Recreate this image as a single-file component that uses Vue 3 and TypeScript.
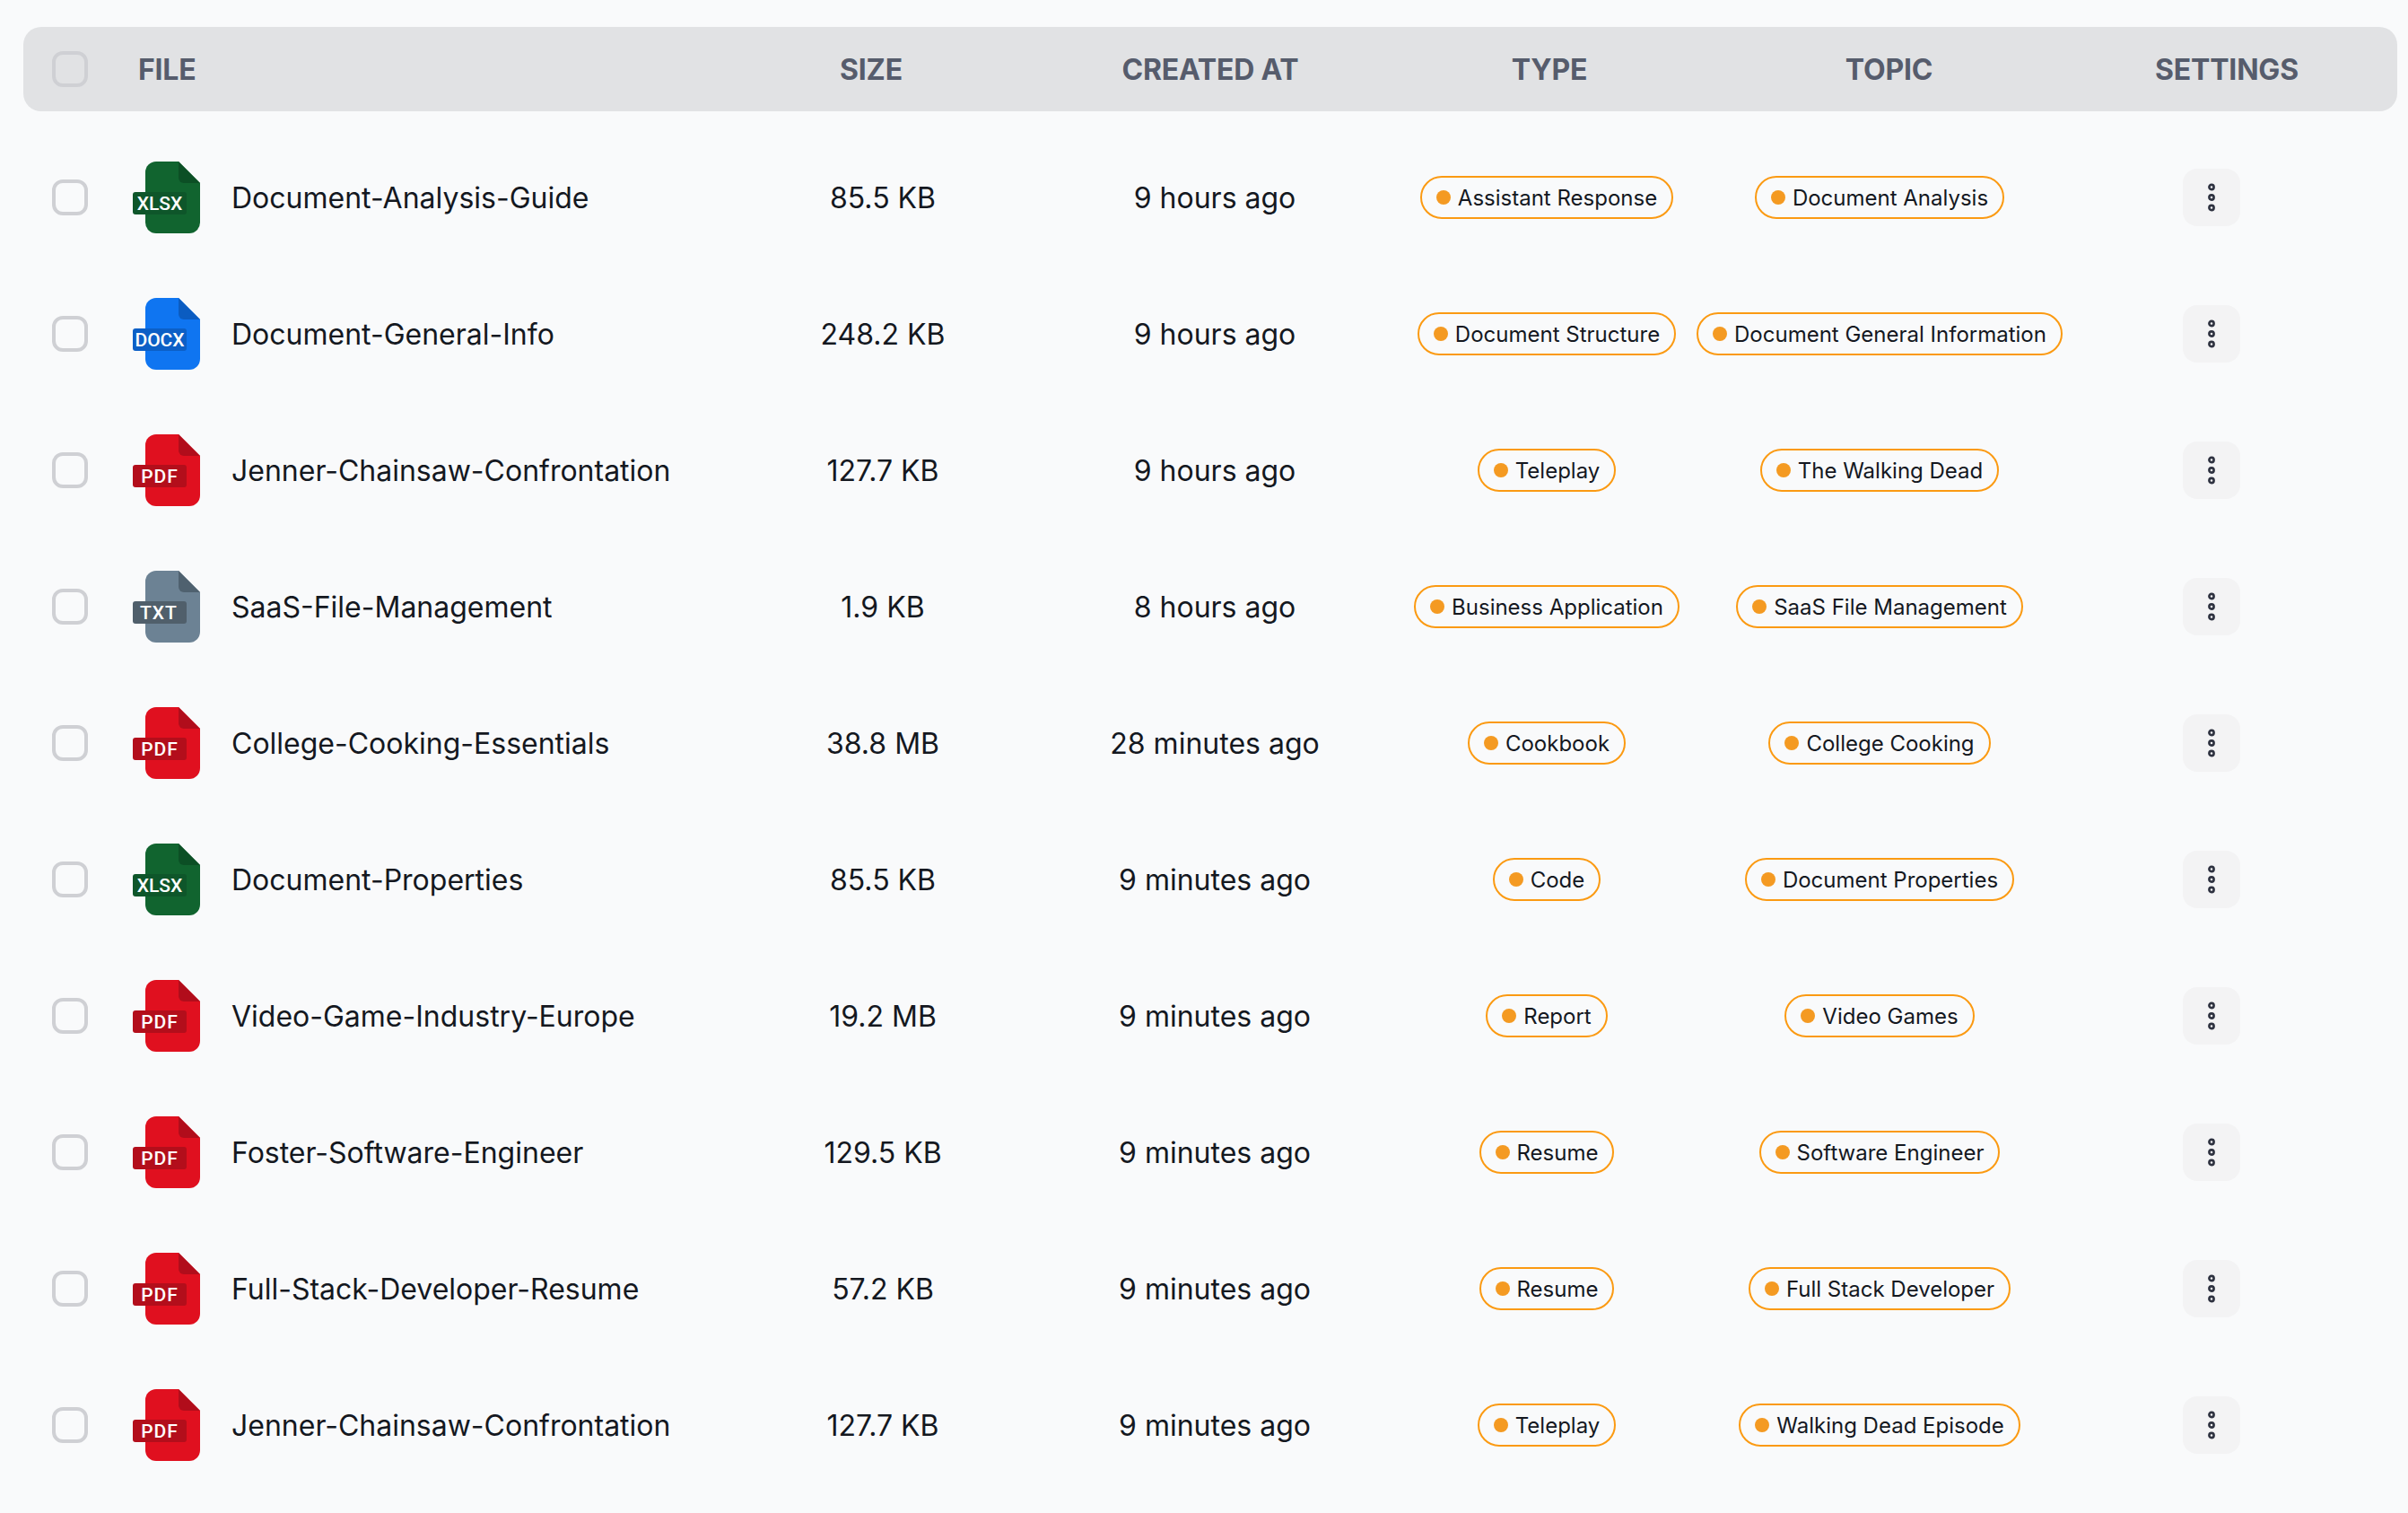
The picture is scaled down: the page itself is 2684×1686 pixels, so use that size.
<script setup lang="ts">
type Kind = 'xlsx' | 'docx' | 'pdf' | 'txt'
interface Row { name: string; kind: Kind; size: string; created: string; type: string; topic: string }

const palette: Record<Kind, { body: string; dark: string; label: string; text: string; x: number; spacing: number }> = {
  xlsx: { body: '#11642f', dark: '#0c4f25', label: '#0e562a', text: 'XLSX', x: 30, spacing: 0 },
  docx: { body: '#0f75f1', dark: '#0b5cc1', label: '#0c5fc6', text: 'DOCX', x: 30, spacing: 0 },
  pdf: { body: '#e0101f', dark: '#b10d1b', label: '#b30e1b', text: 'PDF', x: 30, spacing: 1 },
  txt: { body: '#6c8294', dark: '#4f616f', label: '#505f6b', text: 'TXT', x: 29, spacing: 1 },
}

const rows: Row[] = [
  { name: 'Document-Analysis-Guide', kind: 'xlsx', size: '85.5 KB', created: '9 hours ago', type: 'Assistant Response', topic: 'Document Analysis' },
  { name: 'Document-General-Info', kind: 'docx', size: '248.2 KB', created: '9 hours ago', type: 'Document Structure', topic: 'Document General Information' },
  { name: 'Jenner-Chainsaw-Confrontation', kind: 'pdf', size: '127.7 KB', created: '9 hours ago', type: 'Teleplay', topic: 'The Walking Dead' },
  { name: 'SaaS-File-Management', kind: 'txt', size: '1.9 KB', created: '8 hours ago', type: 'Business Application', topic: 'SaaS File Management' },
  { name: 'College-Cooking-Essentials', kind: 'pdf', size: '38.8 MB', created: '28 minutes ago', type: 'Cookbook', topic: 'College Cooking' },
  { name: 'Document-Properties', kind: 'xlsx', size: '85.5 KB', created: '9 minutes ago', type: 'Code', topic: 'Document Properties' },
  { name: 'Video-Game-Industry-Europe', kind: 'pdf', size: '19.2 MB', created: '9 minutes ago', type: 'Report', topic: 'Video Games' },
  { name: 'Foster-Software-Engineer', kind: 'pdf', size: '129.5 KB', created: '9 minutes ago', type: 'Resume', topic: 'Software Engineer' },
  { name: 'Full-Stack-Developer-Resume', kind: 'pdf', size: '57.2 KB', created: '9 minutes ago', type: 'Resume', topic: 'Full Stack Developer' },
  { name: 'Jenner-Chainsaw-Confrontation', kind: 'pdf', size: '127.7 KB', created: '9 minutes ago', type: 'Teleplay', topic: 'Walking Dead Episode' },
]
</script>

<template>
  <main class="page">
    <header class="head">
      <span class="check"></span>
      <span class="left">FILE</span>
      <span>SIZE</span>
      <span>CREATED AT</span>
      <span>TYPE</span>
      <span>TOPIC</span>
      <span>SETTINGS</span>
    </header>
    <section class="list">
      <article v-for="(row, i) in rows" :key="i" class="row">
        <span class="check"></span>
        <div class="file">
          <svg class="icon" width="76" height="80" viewBox="0 0 76 80" aria-hidden="true">
            <path d="M26 0H51L75 24V68A12 12 0 0 1 63 80H26A12 12 0 0 1 14 68V12A12 12 0 0 1 26 0Z" :fill="palette[row.kind].body" />
            <path d="M51 0L75 24H57A6 6 0 0 1 51 18Z" :fill="palette[row.kind].dark" />
            <rect x="0" y="34" width="60" height="25" rx="3" :fill="palette[row.kind].label" />
            <text class="icon-text" :x="palette[row.kind].x" y="54" text-anchor="middle" :letter-spacing="palette[row.kind].spacing">{{ palette[row.kind].text }}</text>
          </svg>
          <span class="name">{{ row.name }}</span>
        </div>
        <span>{{ row.size }}</span>
        <span>{{ row.created }}</span>
        <div class="cell"><span class="pill"><i class="dot"></i>{{ row.type }}</span></div>
        <div class="cell"><span class="pill"><i class="dot"></i>{{ row.topic }}</span></div>
        <div class="cell">
          <button class="more" type="button" aria-label="Settings">
            <svg width="12" height="36" viewBox="0 0 12 36" aria-hidden="true">
              <circle cx="6" cy="6.5" r="2.6" />
              <circle cx="6" cy="18" r="2.6" />
              <circle cx="6" cy="29.5" r="2.6" />
            </svg>
          </button>
        </div>
      </article>
    </section>
  </main>
</template>

<style>
html, body { margin: 0; background: #f9fafb; }
</style>

<style scoped>
.page {
  width: 2684px;
  height: 1686px;
  box-sizing: border-box;
  padding: 30px 12px 0 26px;
  background: #f9fafb;
  font-family: Inter, "Liberation Sans", sans-serif;
  color: #14181f;
  overflow: hidden;
}
.head {
  display: grid;
  grid-template-columns: 96px 706px 222px 534px 222px 535px 218px;
  align-items: center;
  height: 94px;
  padding-left: 32px;
  border-radius: 20px;
  background: #e1e2e4;
  color: #565c6c;
  font-size: 32px;
  font-weight: 700;
  letter-spacing: -0.2px;
  text-align: center;
}
.left { text-align: left; }
.list {
  display: flex;
  flex-direction: column;
  padding-top: 20px;
}
.row {
  display: grid;
  grid-template-columns: 90px 686px 300px 440px 300px 442px 298px;
  align-items: center;
  height: 152px;
  padding-left: 32px;
  font-size: 32px;
  text-align: center;
}
.check {
  width: 40px;
  height: 40px;
  box-sizing: border-box;
  border: 4px solid #cfd0d4;
  border-radius: 12px;
}
.file {
  display: flex;
  align-items: center;
  gap: 34px;
  text-align: left;
}
.icon { flex: none; }
.icon-text {
  fill: #fff;
  font-family: Roboto, sans-serif;
  font-size: 21px;
  font-weight: 500;
}
.cell {
  display: flex;
  justify-content: center;
}
.pill {
  display: inline-flex;
  align-items: center;
  height: 48px;
  box-sizing: border-box;
  padding: 0 16px;
  gap: 8px;
  border: 2px solid #fb9a12;
  border-radius: 24px;
  font-size: 24px;
  white-space: nowrap;
}
.dot {
  width: 16px;
  height: 16px;
  border-radius: 50%;
  background: #f49a22;
}
.more {
  display: flex;
  align-items: center;
  justify-content: center;
  width: 64px;
  height: 64px;
  padding: 0;
  border: 0;
  border-radius: 16px;
  background: #f3f3f4;
}
.more circle {
  fill: #f3f3f4;
  stroke: #2e3240;
  stroke-width: 2.6;
}
</style>
